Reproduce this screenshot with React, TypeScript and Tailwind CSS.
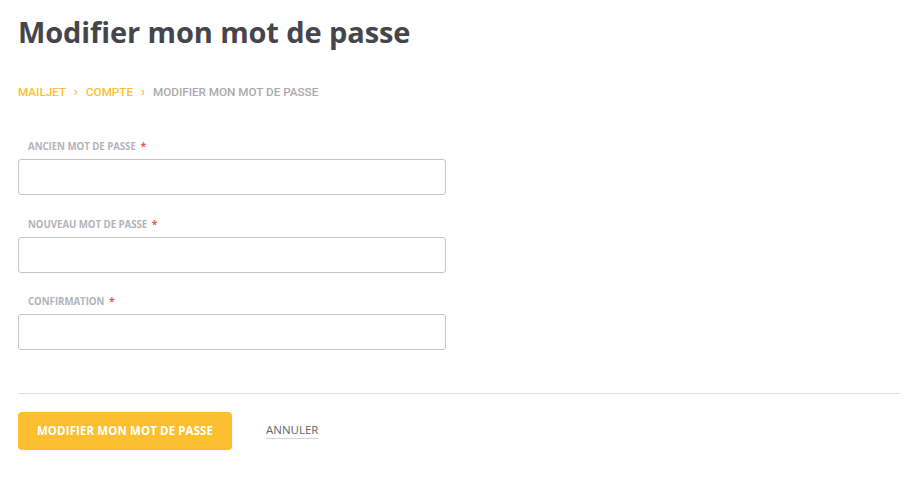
import React from "react";

function Field({ label }: { label: string }) {
  return (
    <div className="flex flex-col">
      <label className="pl-[10px] text-[9.7px] font-bold tracking-[-0.05px] text-[#b3b3ba] leading-[12px] h-[12px]" style={{ fontFamily: '"Open Sans", sans-serif' }}>
        {label}
        <span className="ml-[5px] text-[#e5534b]">*</span>
      </label>
      <input type="password" className="mt-[6px] w-[428px] h-[36px] rounded-[3px] border border-[#c6c6cb] bg-white outline-none" />
    </div>
  );
}

export default function App() {
  return (
    <div className="w-[906px] h-[478px] bg-white pl-[18px] pr-[6px] pt-[14px]" style={{ fontFamily: '"Open Sans", sans-serif' }}>
      <h1 className="text-[29px] font-bold leading-[36px] text-[#45454c] tracking-[-0.1px]">Modifier mon mot de passe</h1>
      <nav className="mt-[35px] flex items-center text-[11.7px] font-medium leading-[14px]" style={{ fontFamily: 'Roboto, sans-serif' }}>
        <span className="text-[#fbbf2f]">MAILJET</span>
        <span className="mx-[8px] text-[#fbbf2f] text-[13px] font-bold">›</span>
        <span className="text-[#fbbf2f]">COMPTE</span>
        <span className="mx-[8px] text-[#fbbf2f] text-[13px] font-bold">›</span>
        <span className="text-[#a9a9ae]">MODIFIER MON MOT DE PASSE</span>
      </nav>
      <div className="mt-[42px] flex flex-col gap-[23.5px]">
        <Field label="ANCIEN MOT DE PASSE" />
        <Field label="NOUVEAU MOT DE PASSE" />
        <Field label="CONFIRMATION" />
      </div>
      <div className="mt-[43px] border-t border-[#e0e0e3]" />
      <div className="mt-[18px] flex items-center">
        <button className="h-[38px] w-[214px] rounded-[4px] bg-[#fbbf30] text-white text-[11.5px] font-bold tracking-[0.1px]">MODIFIER MON MOT DE PASSE</button>
        <button className="ml-[34px] text-[11.5px] text-[#66666c] border-b border-[#d5d5d9] leading-[14px] pb-[1px]">ANNULER</button>
      </div>
    </div>
  );
}
